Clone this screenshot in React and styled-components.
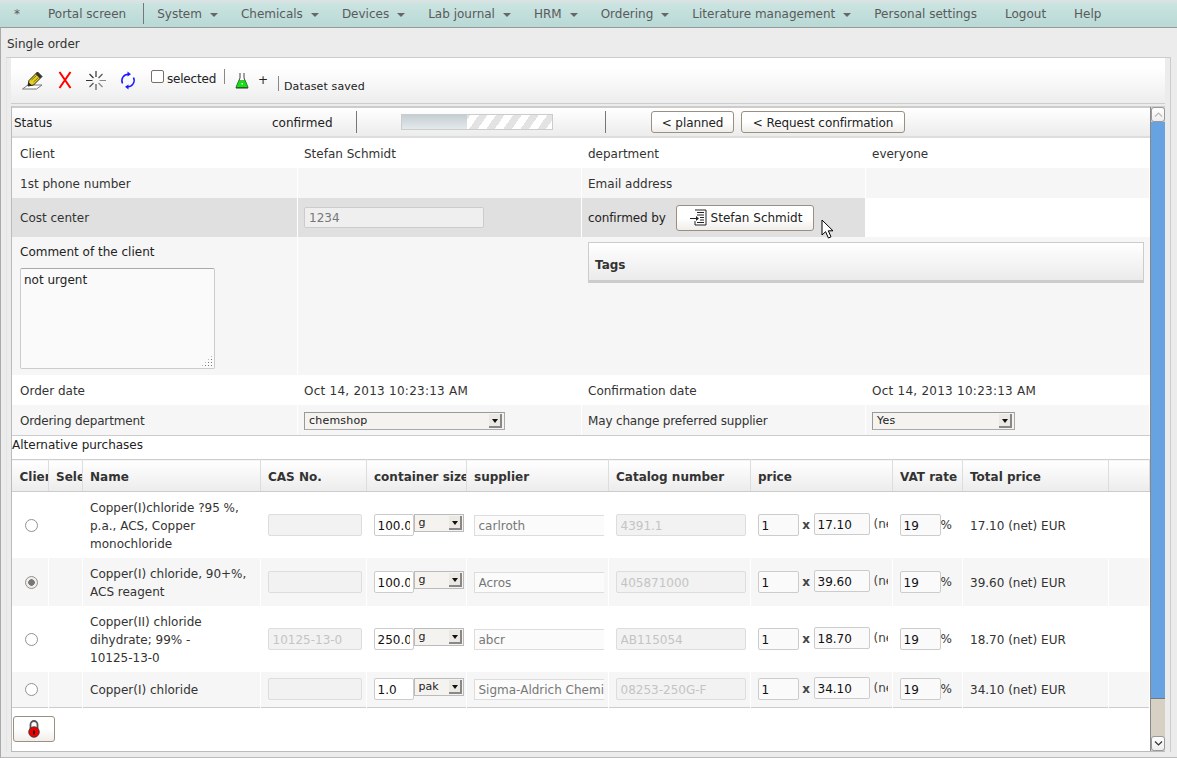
import styled, { createGlobalStyle } from "styled-components"

const GlobalStyle = createGlobalStyle`
html, body {
  margin: 0;
  padding: 0;
  height: 758px;
  overflow: hidden;
  background: #ececec;
  font-family: "DejaVu Sans", Verdana, sans-serif;
  font-size: 12px;
  color: #333;
}
* { box-sizing: border-box; }
`

const menuItems = [
  { label: "*" },
  { label: "Portal screen" },
  { sep: true },
  { label: "System", sub: true },
  { label: "Chemicals", sub: true },
  { label: "Devices", sub: true },
  { label: "Lab journal", sub: true },
  { label: "HRM", sub: true },
  { label: "Ordering", sub: true },
  { label: "Literature management", sub: true },
  { label: "Personal settings" },
  { label: "Logout" },
  { label: "Help" },
]

const orders = [
  { name: "Copper(I)chloride ?95 %, p.a., ACS, Copper monochloride", cas: "", qty: "100.0", unit: "g", supplier: "carlroth", cat: "4391.1", price: "17.10" },
  { name: "Copper(I) chloride, 90+%, ACS reagent", cas: "", qty: "100.0", unit: "g", supplier: "Acros", cat: "405871000", price: "39.60", checked: true },
  { name: "Copper(II) chloride dihydrate; 99% -", suffix: "10125-13-0", cas: "10125-13-0", qty: "250.0", unit: "g", supplier: "abcr", cat: "AB115054", price: "18.70" },
  { name: "Copper(I) chloride", cas: "", qty: "1.0", unit: "pak", supplier: "Sigma-Aldrich Chemie", cat: "08253-250G-F", price: "34.10", short: true },
]

const columns = [
  { title: "Client", w: 36 },
  { title: "Selected", w: 34 },
  { title: "Name", w: 178 },
  { title: "CAS No.", w: 106 },
  { title: "container size", w: 100 },
  { title: "supplier", w: 142 },
  { title: "Catalog number", w: 142 },
  { title: "price", w: 142 },
  { title: "VAT rate", w: 70 },
  { title: "Total price", w: 146 },
  { title: "", w: 41 },
]

function PencilIcon() {
  return (
    <svg width="22" height="19" viewBox="0 0 22 19">
      <path d="M0.5 18 L6 14 H20 L14.5 18 Z" fill="#fff" stroke="#777" strokeWidth="1" />
      <path d="M6 15 L7 9.5 L15.5 1 L20 5.5 L11.5 14 Z" fill="#e6d21e" stroke="#222" strokeWidth="1" />
      <path d="M15.5 1 L20 5.5 L18 7.5 L13.5 3 Z" fill="#333" />
      <path d="M9.5 9 L14.5 4.5 M11.5 11 L16.5 6.5" stroke="#7a7010" strokeWidth="1" />
      <path d="M6 15 L6.7 11.5 L9.5 14 Z" fill="#222" />
    </svg>
  )
}

function CrossIcon() {
  return (
    <svg width="14" height="18" viewBox="0 0 14 18">
      <path d="M1.5 1 L12.5 17 M12.5 1 L1.5 17" stroke="#f00" strokeWidth="2" fill="none" />
    </svg>
  )
}

function BurstIcon() {
  return (
    <svg width="20" height="19" viewBox="0 0 20 19">
      <path d="M10 0 V6 M0 9.5 H6.5 M3.5 3 L7.5 7" stroke="#333" strokeWidth="1.2" />
      <path d="M16.5 3 L12.5 7 M3.5 16 L7.5 12 M10 13 V19" stroke="#555" strokeWidth="1.2" />
      <path d="M13.5 9.5 H20 M16.5 16 L12.5 12" stroke="#888" strokeWidth="1.2" />
    </svg>
  )
}

function RefreshIcon() {
  return (
    <svg width="16" height="19" viewBox="0 0 16 19">
      <path d="M2.5 12.5 A6.5 6.5 0 0 1 8.5 3.2 M13.5 6.5 A6.5 6.5 0 0 1 7.5 15.8" stroke="#1a1aff" strokeWidth="1.5" fill="none" />
      <path d="M7.5 0.5 L11 3.2 L7.5 5.6 Z M8.5 13.4 L5 15.8 L8.5 18.5 Z" fill="#1a1aff" />
    </svg>
  )
}

function FlaskIcon() {
  return (
    <svg width="14" height="17" viewBox="0 0 14 17">
      <path d="M5 1 V6 L1 15.5 H13 L9 6 V1" fill="#fff" stroke="#444" strokeWidth="1" />
      <path d="M4 8.5 H10 L13 15.5 H1 Z" fill="#14e014" stroke="#0a8a0a" strokeWidth="0.5" />
      <path d="M1 16 H13" stroke="#333" strokeWidth="1" />
      <rect x="6.5" y="11" width="1.5" height="1.5" fill="#fff" />
    </svg>
  )
}

function ListIcon() {
  return (
    <svg width="17" height="17" viewBox="0 0 17 17">
      <path d="M5 1 H16 V16 H5 V12" fill="#fff" stroke="#222" strokeWidth="1" />
      <path d="M7 3.5 H14 M7 6 H14 M10 8.5 H14 M10 11 H14 M7 13.5 H14" stroke="#222" strokeWidth="1" />
      <path d="M0 9.5 H8" stroke="#222" strokeWidth="1" />
      <path d="M6 7 L9 9.5 L6 12 Z" fill="#222" />
    </svg>
  )
}

function LockIcon() {
  return (
    <svg width="12" height="18" viewBox="0 0 12 18">
      <path d="M2.5 9 V4.5 A3.5 3.5 0 0 1 9.5 4.5 V9" fill="none" stroke="#555" strokeWidth="1.8" />
      <circle cx="6" cy="12" r="5.3" fill="#ee0000" stroke="#333" strokeWidth="0.8" />
      <rect x="5" y="10.5" width="2" height="4" fill="#300" />
    </svg>
  )
}

function CursorIcon() {
  return (
    <svg width="14" height="20" viewBox="0 0 14 20">
      <path d="M1 1 V16 L4.6 12.7 L7.4 19 L10 17.8 L7.3 11.8 H12 Z" fill="#fff" stroke="#000" strokeWidth="1" strokeLinejoin="round" />
    </svg>
  )
}

function Select({ value, small }) {
  return (
    <SelectBox $small={small}>
      <span>{value}</span>
      <SelectArrow />
    </SelectBox>
  )
}

export default function App() {
  return (
    <>
      <GlobalStyle />
      <Menu>
        {menuItems.map((item, i) =>
          item.sep ? (
            <MenuSep key={i} />
          ) : (
            <MenuItem key={i} $sub={item.sub}>
              {item.label}
              {item.sub && <Caret />}
            </MenuItem>
          )
        )}
      </Menu>
      <Main>
        <Title>Single order</Title>
        <Panel>
          <Toolbar>
            <ToolIcon $w={36}><PencilIcon /></ToolIcon>
            <ToolIcon $w={28}><CrossIcon /></ToolIcon>
            <ToolIcon $w={34}><BurstIcon /></ToolIcon>
            <ToolIcon $w={32}><RefreshIcon /></ToolIcon>
            <CheckLabel>
              <CheckBox />
              selected
            </CheckLabel>
            <ToolSep />
            <Flask><FlaskIcon /></Flask>
            <Plus>+</Plus>
            <SavedSep />
            <Saved>Dataset saved</Saved>
          </Toolbar>
          <Scroller>
            <Content>
              <StatusRow>
                <StatusLabel>Status</StatusLabel>
                <StatusValue>confirmed</StatusValue>
                <ProgressWrap>
                  <Progress><ProgressFill style={{ width: "43%" }} /></Progress>
                </ProgressWrap>
                <StatusButtons>
                  <Button $w={83}>&lt; planned</Button>
                  <Button $w={164}>&lt; Request confirmation</Button>
                </StatusButtons>
              </StatusRow>

              <FormRow $h={30}>
                <Cell>Client</Cell>
                <Cell>Stefan Schmidt</Cell>
                <Cell>department</Cell>
                <Cell>everyone</Cell>
              </FormRow>
              <FormRow $h={30} $alt>
                <Cell>1st phone number</Cell>
                <Cell />
                <Cell>Email address</Cell>
                <Cell />
              </FormRow>
              <FormRow $h={39}>
                <Cell $dark>Cost center</Cell>
                <Cell $dark><ReadonlyInput $w={180} value="1234" readOnly /></Cell>
                <Cell $dark>
                  <ConfirmedLabel>confirmed by</ConfirmedLabel>
                  <PersonButton><ListIcon />Stefan Schmidt</PersonButton>
                  <Pointer><CursorIcon /></Pointer>
                </Cell>
                <Cell />
              </FormRow>
              <CommentRow>
                <CommentCell>
                  <CommentLabel>Comment of the client</CommentLabel>
                  <CommentWrap>
                    <Comment defaultValue="not urgent" />
                  </CommentWrap>
                </CommentCell>
                <CommentGap />
                <TagsCell>
                  <Tags>Tags</Tags>
                </TagsCell>
              </CommentRow>
              <FormRow $h={30}>
                <Cell>Order date</Cell>
                <Cell $date>Oct 14, 2013 10:23:13 AM</Cell>
                <Cell>Confirmation date</Cell>
                <Cell $date>Oct 14, 2013 10:23:13 AM</Cell>
              </FormRow>
              <FormRow $h={30} $alt>
                <Cell $tight>Ordering department</Cell>
                <Cell><Select value="chemshop" /></Cell>
                <Cell $tight>May change preferred supplier</Cell>
                <Cell><Select value="Yes" small /></Cell>
              </FormRow>

              <SectionTitle>Alternative purchases</SectionTitle>
              <OrderTable>
                <colgroup>
                  {columns.map((c, i) => <col key={i} style={{ width: c.w }} />)}
                </colgroup>
                <thead>
                  <tr>
                    {columns.map((c, i) => <Th key={i}>{c.title}</Th>)}
                  </tr>
                </thead>
                <tbody>
                  {orders.map((o, i) => (
                    <Tr key={i} $alt={i % 2 === 1} $short={o.short}>
                      <RadioCell><Radio $checked={o.checked} /></RadioCell>
                      <Td />
                      <TextTd>
                        {o.name}
                        {o.suffix && <> <NoWrap>{o.suffix}</NoWrap></>}
                      </TextTd>
                      <Td><FieldInput $w={94} value={o.cas} readOnly /></Td>
                      <Td>
                        <Inline>
                          <QtyInput value={o.qty} readOnly />
                          <UnitSelect>
                            <span>{o.unit}</span>
                            <SelectArrow />
                          </UnitSelect>
                        </Inline>
                      </Td>
                      <Td><SupplierInput value={o.supplier} readOnly /></Td>
                      <Td><FieldInput $w={130} value={o.cat} readOnly /></Td>
                      <Td>
                        <Inline>
                          <AmountInput $w={41} value="1" readOnly />
                          <Times>x</Times>
                          <AmountInput $w={56} $up value={o.price} readOnly />
                          <NetClip>(net)</NetClip>
                        </Inline>
                      </Td>
                      <Td>
                        <Inline>
                          <AmountInput $w={41} value="19" readOnly />
                          <Percent>%</Percent>
                        </Inline>
                      </Td>
                      <TextTd>{o.price} (net) EUR</TextTd>
                      <Td />
                    </Tr>
                  ))}
                </tbody>
              </OrderTable>
              <Footer>
                <LockButton><LockIcon /></LockButton>
              </Footer>
            </Content>
            <Scrollbar>
              <ScrollButton>
                <svg width="9" height="5" viewBox="0 0 9 5"><path d="M1 4.5 L4.5 1 L8 4.5" fill="none" stroke="#bbb" strokeWidth="1.2" /></svg>
              </ScrollButton>
              <ScrollThumb />
              <ScrollTrack />
              <ScrollButton>
                <svg width="9" height="5" viewBox="0 0 9 5"><path d="M1 0.5 L4.5 4 L8 0.5" fill="none" stroke="#333" strokeWidth="1.2" /></svg>
              </ScrollButton>
            </Scrollbar>
          </Scroller>
        </Panel>
      </Main>
    </>
  )
}

const Menu = styled.div`
  height: 27px;
  display: flex;
  align-items: center;
  background: linear-gradient(to bottom, #dde3e3 0, #c9e3e0 5px, #b8d9d5 100%);
`

const MenuItem = styled.div`
  display: flex;
  align-items: center;
  padding: 0 ${(p) => (p.$sub ? "9px" : "14px")} 0 14px;
  color: #5a5a5a;
  white-space: nowrap;
`

const Caret = styled.span`
  width: 0;
  height: 0;
  margin-left: 8px;
  margin-top: 2px;
  border-left: 4px solid transparent;
  border-right: 4px solid transparent;
  border-top: 4px solid #666;
`

const MenuSep = styled.div`
  width: 1px;
  height: 21px;
  margin: 0 -1px 0 3px;
  background: #777;
`

const Main = styled.div`
  height: 731px;
  border-top: 1px solid #999;
  border-left: 1px solid #aaa;
  border-bottom: 1px solid #bbb;
  display: flex;
  flex-direction: column;
`

const Title = styled.div`
  height: 29px;
  padding: 9px 0 0 6px;
  color: #333;
`

const Panel = styled.div`
  width: 1165px;
  margin-left: 5px;
  height: 695px;
  flex: none;
  padding: 0 5px 0 4px;
  background: #ececec;
  border-top: 1px solid #ccc;
  border-right: 1px solid #ccc;
  border-left: 1px solid #e4e4e4;
  display: flex;
  flex-direction: column;
`

const Toolbar = styled.div`
  height: 46px;
  flex: none;
  display: flex;
  align-items: flex-start;
  background: linear-gradient(to bottom, #fff 0, #fff 20%, #ededed 100%);
  border-bottom: 1px solid #ccc;
  padding: 13px 0 0 11px;
`

const ToolIcon = styled.div`
  width: ${(p) => p.$w}px;
  height: 20px;
  flex: none;
`

const CheckLabel = styled.label`
  display: flex;
  align-items: flex-start;
  margin-left: -1px;
  color: #222;
  line-height: 16px;
  letter-spacing: -0.2px;
  width: 73px;
`

const CheckBox = styled.span`
  width: 13px;
  height: 13px;
  margin: -1px 3px 0 0;
  background: #fff;
  border: 1px solid #7a6f68;
  border-radius: 2px;
`

const ToolSep = styled.div`
  width: 1px;
  height: 15px;
  margin-top: -2px;
  background: #888;
`

const Flask = styled.div`
  margin: 1px 0 0 10px;
  width: 23px;
`

const Plus = styled.div`
  color: #222;
  line-height: 18px;
  width: 20px;
`

const SavedSep = styled.div`
  width: 1px;
  height: 15px;
  margin-top: 5px;
  background: #888;
`

const Saved = styled.div`
  margin: 9px 0 0 5px;
  font-size: 11px;
  letter-spacing: 0.12px;
  color: #222;
`

const Scroller = styled.div`
  margin-top: 2px;
  flex: none;
  height: 646px;
  background: #fff;
  border-top: 1px solid #ccc;
  border-left: 1px solid #bbb;
  border-bottom: 1px solid #bbb;
  display: flex;
`

const Content = styled.div`
  width: 1138px;
  flex: none;
  border-top: 1px solid #ccc;
  display: flex;
  flex-direction: column;
`

const StatusRow = styled.div`
  height: 30px;
  flex: none;
  display: flex;
  align-items: center;
  background: linear-gradient(to bottom, #fff, #ececec);
  border-bottom: 2px solid #ddd;
  color: #222;
`

const StatusLabel = styled.div`
  width: 260px;
  padding: 2px 0 0 2px;
`

const StatusValue = styled.div`
  width: 85px;
  height: 22px;
  line-height: 24px;
  border-right: 1px solid #777;
`

const ProgressWrap = styled.div`
  width: 249px;
  height: 22px;
  padding: 3px 0 0 44px;
  border-right: 1px solid #777;
`

const Progress = styled.div`
  width: 152px;
  height: 16px;
  border: 1px solid #ccc;
  background: repeating-linear-gradient(125deg, #fff 0 7px, #e3e3e3 7px 14px);
`

const ProgressFill = styled.div`
  height: 100%;
  background: linear-gradient(to bottom, #c4ced3, #e4eaec);
`

const StatusButtons = styled.div`
  display: flex;
  gap: 7px;
  margin-left: 45px;
`

const Button = styled.button`
  width: ${(p) => p.$w}px;
  height: 22px;
  padding: 2px 0 0;
  font: inherit;
  letter-spacing: -0.08px;
  color: #222;
  background: linear-gradient(to bottom, #fff 50%, #f0eeea);
  border: 1px solid #9c8f82;
  border-radius: 3px;
`

const FormRow = styled.div`
  height: ${(p) => p.$h}px;
  flex: none;
  display: grid;
  grid-template-columns: 286px 284px 284px 1fr;
  background: ${(p) => (p.$alt ? "#f6f6f6" : "#fff")};
`

const Cell = styled.div`
  position: relative;
  display: flex;
  align-items: center;
  padding: ${(p) => (p.$dark ? "0" : "2px")} 2px 0 6px;
  white-space: nowrap;
  letter-spacing: ${(p) => (p.$date ? "0.25px" : p.$tight ? "-0.16px" : "0")};
  background: ${(p) => (p.$dark ? "#e0e0e0" : "transparent")};
  border-right: 1px solid #fff;
  color: #333;
  &:first-child {
    padding-left: 8px;
  }
`

const ReadonlyInput = styled.input`
  width: ${(p) => p.$w}px;
  height: 21px;
  padding: 1px 4px 0;
  font: inherit;
  color: #777;
  background: #efefef;
  border: 1px solid #ccc;
  border-radius: 2px;
  outline: none;
`

const ConfirmedLabel = styled.span`
  color: #222;
  letter-spacing: -0.1px;
  width: 88px;
  flex: none;
`

const PersonButton = styled.button`
  width: 138px;
  height: 26px;
  flex: none;
  margin-top: 1px;
  padding: 0 0 1px 2px;
  display: flex;
  align-items: center;
  justify-content: center;
  gap: 4px;
  font: inherit;
  color: #222;
  background: linear-gradient(to bottom, #fff 50%, #f0eeea);
  border: 1px solid #9c8f82;
  border-radius: 3px;
`

const Pointer = styled.div`
  position: absolute;
  left: 239px;
  top: 21px;
  line-height: 0;
`

const CommentRow = styled.div`
  height: 138px;
  flex: none;
  display: grid;
  grid-template-columns: 286px 284px 1fr;
  background: #f6f6f6;
`

const CommentCell = styled.div`
  padding: 7px 0 0 8px;
  border-right: 1px solid #fff;
`

const CommentGap = styled.div`
  border-right: 1px solid #f6f6f6;
`

const CommentLabel = styled.div`
  color: #222;
  line-height: 16px;
  margin-bottom: 8px;
`

const CommentWrap = styled.div`
  position: relative;
  width: 195px;
  &::after {
    content: "";
    position: absolute;
    right: 2px;
    bottom: 2px;
    width: 12px;
    height: 12px;
    background: radial-gradient(circle, #777 0 0.8px, transparent 0.9px) 0 0 / 3px 3px;
    clip-path: polygon(100% 0, 100% 100%, 0 100%);
  }
`

const Comment = styled.textarea`
  display: block;
  width: 195px;
  height: 101px;
  padding: 4px 3px;
  font: inherit;
  color: #222;
  background: #fafafa;
  border: 1px solid #ccc;
  border-top-color: #aaa;
  border-radius: 2px;
  outline: none;
  resize: none;
`

const TagsCell = styled.div`
  padding: 5px 6px 0 6px;
`

const Tags = styled.div`
  height: 41px;
  padding-left: 6px;
  line-height: 44px;
  font-weight: bold;
  color: #333;
  background: linear-gradient(to bottom, #fff, #ebebeb);
  border: 1px solid #ccc;
  border-bottom: 3px solid #ccc;
`

const SelectBox = styled.div`
  width: ${(p) => (p.$small ? "143px" : "201px")};
  height: 18px;
  margin-top: -1px;
  display: flex;
  align-items: center;
  justify-content: space-between;
  padding: 0 2px 0 4px;
  font-size: 11px;
  letter-spacing: 0.2px;
  color: #222;
  background: #f5f3f0;
  border: 1px solid #aaa;
  border-left-color: #999;
  border-top-color: #999;
`

const SelectArrow = styled.span`
  position: relative;
  width: 13px;
  height: 14px;
  flex: none;
  background: #ece9e4;
  border-right: 2px solid #888;
  border-bottom: 2px solid #888;
  &::after {
    content: "";
    position: absolute;
    left: 3px;
    top: 5px;
    border-left: 3px solid transparent;
    border-right: 3px solid transparent;
    border-top: 4px solid #111;
  }
`

const SectionTitle = styled.div`
  height: 24px;
  flex: none;
  line-height: 19px;
  color: #222;
  border-top: 1px solid #ccc;
`

const OrderTable = styled.table`
  width: 1137px;
  table-layout: fixed;
  border-collapse: collapse;
  border-bottom: 1px solid #ccc;
`

const Th = styled.th`
  height: 32px;
  padding: 2px 0 0 7.5px;
  overflow: hidden;
  white-space: nowrap;
  text-align: left;
  font-weight: bold;
  color: #333;
  background: linear-gradient(to bottom, #fff, #ececec);
  border-top: 1px solid #ccc;
  border-bottom: 1px solid #ccc;
  border-right: 1px solid #ddd;
`

const Tr = styled.tr`
  height: ${(p) => (p.$short ? "35px" : "auto")};
  background: ${(p) => (p.$alt || p.$short ? "#f6f6f6" : "#fff")};
`

const Td = styled.td`
  padding: 6px 0 6px 7px;
  line-height: 18px;
  color: #333;
  overflow: hidden;
  border-right: 1px solid #fff;
`

const TextTd = styled(Td)`
  padding: 7px 8px 5px 7.5px;
`

const RadioCell = styled(Td)`
  padding-left: 13px;
`

const NoWrap = styled.span`
  white-space: nowrap;
`

const Radio = styled.span`
  display: block;
  width: 13px;
  height: 13px;
  border-radius: 50%;
  border: 1px solid #998f88;
  background: ${(p) => (p.$checked ? "radial-gradient(circle, #777 0 3px, #eee 3.5px)" : "#fff")};
`

const Inline = styled.div`
  display: flex;
  align-items: center;
  white-space: nowrap;
`

const FieldInput = styled.input`
  display: block;
  width: ${(p) => p.$w}px;
  height: 22px;
  padding: 2px 4px 0;
  font: inherit;
  color: #c4c4c4;
  background: #f2f2f2;
  border: 1px solid #ddd;
  border-radius: 2px;
  outline: none;
`

const QtyInput = styled.input`
  width: 40px;
  height: 22px;
  flex: none;
  padding: 2px 3px 0;
  font: inherit;
  color: #111;
  background: #fff;
  border: 1px solid #ccc;
  border-radius: 2px;
  outline: none;
`

const UnitSelect = styled.div`
  width: 50px;
  height: 18px;
  flex: none;
  margin-top: -4px;
  display: flex;
  align-items: center;
  justify-content: space-between;
  padding: 0 1px 0 4px;
  font-size: 11px;
  color: #222;
  background: #f5f3f0;
  border: 1px solid #bbb;
`

const SupplierInput = styled.input`
  display: block;
  width: 130px;
  height: 21px;
  padding: 2px 0 0 4px;
  font: inherit;
  color: #777;
  background: #fbfbfb;
  border: 1px solid #ddd;
  border-right: 0;
  outline: none;
`

const AmountInput = styled.input`
  width: ${(p) => p.$w}px;
  height: 22px;
  flex: none;
  margin-top: ${(p) => (p.$up ? "-3px" : "0")};
  padding: 2px 3px 0;
  font: inherit;
  color: #111;
  background: #fafafa;
  border: 1px solid #ccc;
  border-radius: 2px;
  outline: none;
`

const Times = styled.span`
  width: 15px;
  flex: none;
  text-align: center;
  font-weight: bold;
  color: #444;
`

const NetClip = styled.span`
  width: 14px;
  flex: none;
  margin-left: 4px;
  margin-top: -3px;
  overflow: hidden;
  color: #444;
`

const Percent = styled.span`
  color: #333;
`

const Footer = styled.div`
  padding: 8px 0 0 1px;
`

const LockButton = styled.button`
  width: 42px;
  height: 26px;
  padding: 0;
  display: flex;
  align-items: center;
  justify-content: center;
  background: linear-gradient(to bottom, #fff 50%, #f0eeea);
  border: 1px solid #9c8f82;
  border-radius: 3px;
`

const Scrollbar = styled.div`
  width: 15px;
  flex: none;
  display: flex;
  flex-direction: column;
  background: #d6d0c5;
  border-left: 1px solid #888;
`

const ScrollButton = styled.div`
  height: 15px;
  flex: none;
  display: flex;
  align-items: center;
  justify-content: center;
  background: linear-gradient(to bottom, #fff, #eee);
  border: 1px solid #999;
  border-radius: 3px;
`

const ScrollThumb = styled.div`
  height: 577px;
  flex: none;
  background: #66a3e0;
  border-bottom: 1px solid #777;
`

const ScrollTrack = styled.div`
  flex: 1;
  background: #d6d0c5;
`
